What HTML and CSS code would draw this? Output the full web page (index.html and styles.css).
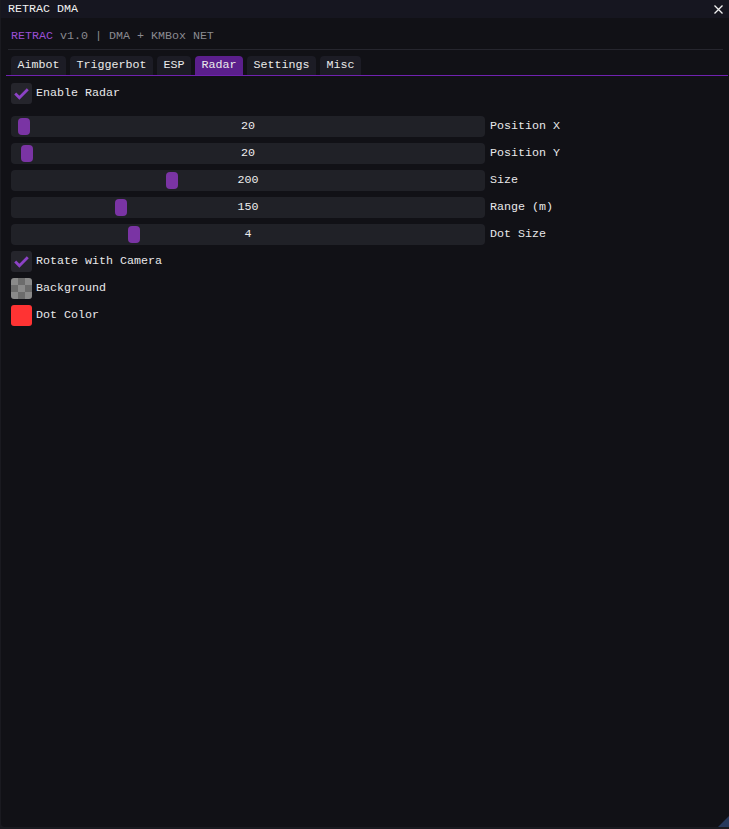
FILE: index.html
```html
<!DOCTYPE html>
<html>
<head>
<meta charset="utf-8">
<link rel="stylesheet" href="styles.css">
</head>
<body>
<div class="window">
  <div class="titlebar">
    <span class="title">RETRAC DMA</span>
    <svg class="close" width="9" height="9" viewBox="0 0 9 9"><path d="M0.5 0.5 L8.5 8.5 M8.5 0.5 L0.5 8.5" stroke="#f0f0f0" stroke-width="1.3"/></svg>
  </div>
  <div class="content">
    <div class="subtitle"><span class="brand">RETRAC</span> v1.0 | DMA + KMBox NET</div>
    <div class="sep"></div>
    <div class="tabbar">
      <div class="tab">Aimbot</div>
      <div class="tab">Triggerbot</div>
      <div class="tab">ESP</div>
      <div class="tab active">Radar</div>
      <div class="tab">Settings</div>
      <div class="tab">Misc</div>
    </div>
    <div class="items">
      <div class="row spaced">
        <div class="box"><svg width="21" height="21" viewBox="0 0 21 21"><polyline points="4.2,10.5 8.4,14.7 16.8,6.3" fill="none" stroke="#8c42c6" stroke-width="2.8"/></svg></div>
        <span class="label">Enable Radar</span>
      </div>
      <div class="row">
        <div class="slider"><div class="track"><div class="grab" style="--p:0.0104"></div></div><span class="val">20</span></div>
        <span class="slabel">Position X</span>
      </div>
      <div class="row">
        <div class="slider"><div class="track"><div class="grab" style="--p:0.0185"></div></div><span class="val">20</span></div>
        <span class="slabel">Position Y</span>
      </div>
      <div class="row">
        <div class="slider"><div class="track"><div class="grab" style="--p:0.3333"></div></div><span class="val">200</span></div>
        <span class="slabel">Size</span>
      </div>
      <div class="row">
        <div class="slider"><div class="track"><div class="grab" style="--p:0.2222"></div></div><span class="val">150</span></div>
        <span class="slabel">Range (m)</span>
      </div>
      <div class="row">
        <div class="slider"><div class="track"><div class="grab" style="--p:0.25"></div></div><span class="val">4</span></div>
        <span class="slabel">Dot Size</span>
      </div>
      <div class="row">
        <div class="box"><svg width="21" height="21" viewBox="0 0 21 21"><polyline points="4.2,10.5 8.4,14.7 16.8,6.3" fill="none" stroke="#8c42c6" stroke-width="2.8"/></svg></div>
        <span class="label">Rotate with Camera</span>
      </div>
      <div class="row">
        <div class="swatch checker"></div>
        <span class="label">Background</span>
      </div>
      <div class="row">
        <div class="swatch red"></div>
        <span class="label">Dot Color</span>
      </div>
    </div>
  </div>
  <div class="grip"></div>
</div>
</body>
</html>
```

FILE: styles.css
```css
* { box-sizing: border-box; }
html, body {
  margin: 0;
  padding: 0;
  background: #1a1a20;
  height: 829px;
  overflow: hidden;
}
body {
  font-family: "Liberation Mono", "DejaVu Sans Mono", monospace;
  font-size: 11.67px;
  line-height: 13px;
  color: #e8e8ea;
}
.window {
  position: relative;
  margin-left: 1px;
  width: 728px;
  height: 827px;
  background: #111116;
  border-radius: 0 0 4px 4px;
  display: flex;
  flex-direction: column;
}
.titlebar {
  height: 18px;
  flex: none;
  background: #161620;
  padding: 0 6px 0 7px;
  display: flex;
  align-items: center;
  justify-content: space-between;
}
.title { color: #f2f2f2; }
.close { display: block; }
.content {
  padding: 0 6px 0 10px;
}
.subtitle {
  margin-top: 12px;
  color: #8a8a90;
  white-space: pre;
}
.brand { color: #9a4fd4; }
.sep {
  height: 1px;
  background: #26262e;
  margin: 6px 0 0 -3px;
}
.tabbar {
  margin: 6px -5px 0 -5px;
  padding-left: 5px;
  display: flex;
  gap: 4px;
  border-bottom: 1px solid #7022b0;
}
.tab {
  height: 19px;
  padding: 0 6.5px;
  display: flex;
  align-items: center;
  background: #1c1c25;
  border-radius: 4px 4px 0 0;
  color: #eaeaea;
}
.tab.active {
  background: #5b1f8c;
}
.items {
  margin-top: 7px;
  display: flex;
  flex-direction: column;
  gap: 6px;
}
.row {
  height: 21px;
  display: flex;
  align-items: center;
}
.row.spaced { margin-bottom: 6px; }
.box {
  width: 21px;
  height: 21px;
  background: #25252c;
  border-radius: 3px;
  flex: none;
}
.box svg { display: block; }
.label { margin-left: 4px; }
.slider {
  width: 474px;
  height: 21px;
  flex: none;
  background: #202127;
  border-radius: 4px;
  display: grid;
}
.track, .val {
  grid-area: 1 / 1;
}
.track {
  padding: 2px;
  display: flex;
}
.grab {
  width: 12px;
  height: 17px;
  background: #7a34a4;
  border-radius: 4px;
  margin-left: calc(var(--p) * (100% - 12px));
}
.val {
  align-self: center;
  justify-self: center;
  color: #eeeeee;
}
.slabel { margin-left: 5px; }
.swatch {
  width: 21px;
  height: 21px;
  border-radius: 3px;
  flex: none;
}
.checker {
  background-color: #8a8a8a;
  background-image:
    linear-gradient(45deg, #6c6c6c 25%, transparent 25%, transparent 75%, #6c6c6c 75%),
    linear-gradient(45deg, #6c6c6c 25%, transparent 25%, transparent 75%, #6c6c6c 75%);
  background-size: 14px 14px;
  background-position: 0 0, 7px 7px;
}
.red { background: #ff3333; }
.grip {
  position: absolute;
  right: 0;
  bottom: 0;
  width: 0;
  height: 0;
  border-style: solid;
  border-width: 0 0 11px 11px;
  border-color: transparent transparent #27395c transparent;
}
```
